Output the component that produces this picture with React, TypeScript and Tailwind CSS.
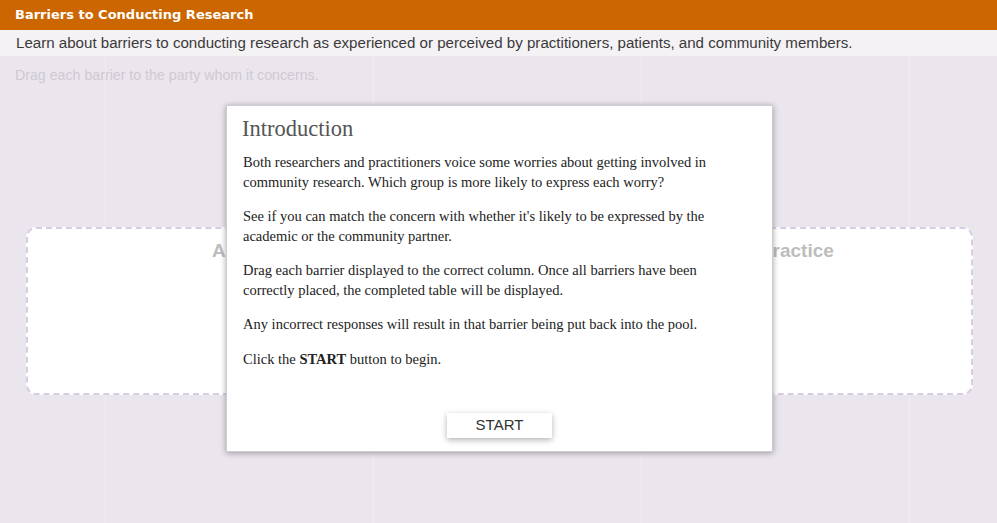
import React from 'react';

//=========================================================================================================
//? Barriers activity - intro modal
//=========================================================================================================

const paragraphs = [
  'Both researchers and practitioners voice some worries about getting involved in community research. Which group is more likely to express each worry?',
  "See if you can match the concern with whether it's likely to be expressed by the academic or the community partner.",
  'Drag each barrier displayed to the correct column. Once all barriers have been correctly placed, the completed table will be displayed.',
  'Any incorrect responses will result in that barrier being put back into the pool.',
];

const DropZone: React.FC<{ title: string }> = ({ title }) => (
  <div className="flex-1 h-[168px] bg-white rounded-[10px] border-2 border-dashed border-[#d6cde3] flex justify-center pt-[8px]">
    <div className="text-[19px] font-bold text-[#bdbdbd]">{title}</div>
  </div>
);

const App: React.FC = () => {
  return (
    <div className="relative w-[997px] h-[523px] overflow-hidden bg-[#ebe5ed] bg-[linear-gradient(90deg,rgba(255,255,255,0.25)_1px,transparent_1px)] bg-[length:268px_100%] bg-[position:105px_0] font-['Liberation_Sans',Arial,sans-serif]">
      {/* Header */}
      <div className="h-[30px] bg-[#cc6600] flex items-center px-[15px]">
        <span className="text-white text-[13px] font-bold font-['DejaVu_Sans',Verdana,sans-serif]">Barriers to Conducting Research</span>
      </div>
      <div className="h-[26px] bg-[#f5f2f6] flex items-center px-[16px]">
        <span className="text-[15.1px] text-[#3a3a3a]">
          Learn about barriers to conducting research as experienced or perceived by practitioners, patients, and community members.
        </span>
      </div>

      {/* Activity body (dimmed) */}
      <div className="px-[15px] pt-[9px] text-[14.2px] leading-[20px] text-[#cfcad2]">Drag each barrier to the party whom it concerns.</div>
      <div className="flex gap-[23px] pl-[26px] pr-[24px] pt-[142px]">
        <DropZone title="Academic" />
        <DropZone title="Community Practice" />
      </div>

      {/* Intro modal */}
      <div className="absolute left-[226px] top-[105px] w-[547px] h-[347px] bg-white border border-[#d0cbd3] shadow-[0_1px_6px_rgba(0,0,0,0.35)] flex flex-col pl-[15px] pr-[36px] pt-[9px] pb-[13px] font-['Liberation_Serif',Georgia,serif]">
        <h2 className="text-[22.5px] text-[#555] leading-[28px]">Introduction</h2>
        <div className="mt-[10px] flex flex-col gap-[15px] text-[14.5px] leading-[19.5px] text-[#222] pl-[1px]">
          {paragraphs.map((p, i) => (
            <p key={i}>{p}</p>
          ))}
          <p>
            Click the <b>START</b> button to begin.
          </p>
        </div>
        <div className="mt-auto flex justify-center">
          <button className="w-[105px] h-[25px] bg-white text-[15px] text-[#333] font-['Liberation_Sans',Arial,sans-serif] shadow-[0_2px_6px_rgba(0,0,0,0.3)] ml-[21px]">
            START
          </button>
        </div>
      </div>
    </div>
  );
};

export default App;
